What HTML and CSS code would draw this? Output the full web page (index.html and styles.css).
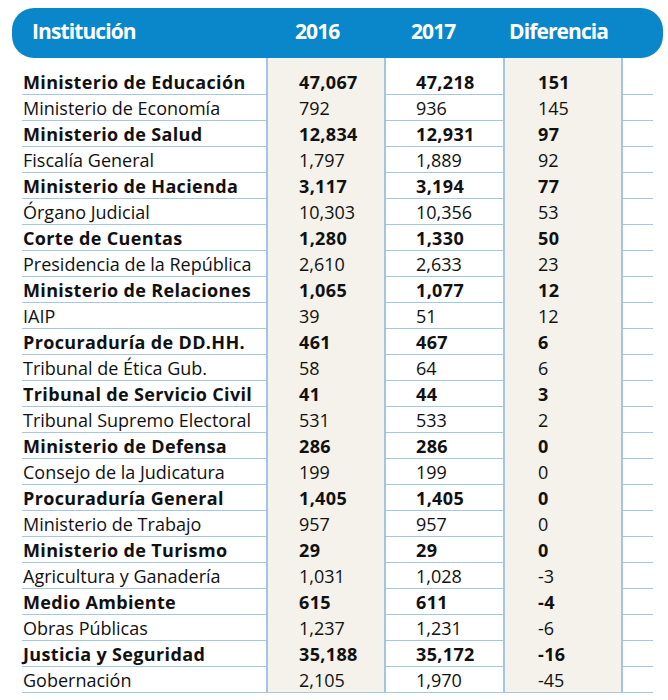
FILE: index.html
```html
<!DOCTYPE html>
<html lang="es">
<head>
<meta charset="utf-8">
<link rel="stylesheet" href="styles.css">
</head>
<body>
<div class="chart">
  <div class="head">
    <div class="hc h-inst"><span>Institución</span></div>
    <div class="hc h-a"><span>2016</span></div>
    <div class="hc h-b"><span>2017</span></div>
    <div class="hc h-c"><span>Diferencia</span></div>
  </div>
  <div class="body">
    <div class="row spacer"><div class="c name"></div><div class="c shade"></div><div class="c plain"></div><div class="c shade"></div><div class="c tail"></div></div>
    <div class="row b"><div class="c name">Ministerio de Educación</div><div class="c shade">47,067</div><div class="c plain">47,218</div><div class="c shade">151</div><div class="c tail"></div></div>
    <div class="row"><div class="c name">Ministerio de Economía</div><div class="c shade">792</div><div class="c plain">936</div><div class="c shade">145</div><div class="c tail"></div></div>
    <div class="row b"><div class="c name">Ministerio de Salud</div><div class="c shade">12,834</div><div class="c plain">12,931</div><div class="c shade">97</div><div class="c tail"></div></div>
    <div class="row"><div class="c name">Fiscalía General</div><div class="c shade">1,797</div><div class="c plain">1,889</div><div class="c shade">92</div><div class="c tail"></div></div>
    <div class="row b"><div class="c name">Ministerio de Hacienda</div><div class="c shade">3,117</div><div class="c plain">3,194</div><div class="c shade">77</div><div class="c tail"></div></div>
    <div class="row"><div class="c name">Órgano Judicial</div><div class="c shade">10,303</div><div class="c plain">10,356</div><div class="c shade">53</div><div class="c tail"></div></div>
    <div class="row b"><div class="c name">Corte de Cuentas</div><div class="c shade">1,280</div><div class="c plain">1,330</div><div class="c shade">50</div><div class="c tail"></div></div>
    <div class="row"><div class="c name">Presidencia de la República</div><div class="c shade">2,610</div><div class="c plain">2,633</div><div class="c shade">23</div><div class="c tail"></div></div>
    <div class="row b"><div class="c name">Ministerio de Relaciones</div><div class="c shade">1,065</div><div class="c plain">1,077</div><div class="c shade">12</div><div class="c tail"></div></div>
    <div class="row"><div class="c name">IAIP</div><div class="c shade">39</div><div class="c plain">51</div><div class="c shade">12</div><div class="c tail"></div></div>
    <div class="row b"><div class="c name">Procuraduría de DD.HH.</div><div class="c shade">461</div><div class="c plain">467</div><div class="c shade">6</div><div class="c tail"></div></div>
    <div class="row"><div class="c name">Tribunal de Ética Gub.</div><div class="c shade">58</div><div class="c plain">64</div><div class="c shade">6</div><div class="c tail"></div></div>
    <div class="row b"><div class="c name">Tribunal de Servicio Civil</div><div class="c shade">41</div><div class="c plain">44</div><div class="c shade">3</div><div class="c tail"></div></div>
    <div class="row"><div class="c name">Tribunal Supremo Electoral</div><div class="c shade">531</div><div class="c plain">533</div><div class="c shade">2</div><div class="c tail"></div></div>
    <div class="row b"><div class="c name">Ministerio de Defensa</div><div class="c shade">286</div><div class="c plain">286</div><div class="c shade">0</div><div class="c tail"></div></div>
    <div class="row"><div class="c name">Consejo de la Judicatura</div><div class="c shade">199</div><div class="c plain">199</div><div class="c shade">0</div><div class="c tail"></div></div>
    <div class="row b"><div class="c name">Procuraduría General</div><div class="c shade">1,405</div><div class="c plain">1,405</div><div class="c shade">0</div><div class="c tail"></div></div>
    <div class="row"><div class="c name">Ministerio de Trabajo</div><div class="c shade">957</div><div class="c plain">957</div><div class="c shade">0</div><div class="c tail"></div></div>
    <div class="row b"><div class="c name">Ministerio de Turismo</div><div class="c shade">29</div><div class="c plain">29</div><div class="c shade">0</div><div class="c tail"></div></div>
    <div class="row"><div class="c name">Agricultura y Ganadería</div><div class="c shade">1,031</div><div class="c plain">1,028</div><div class="c shade">-3</div><div class="c tail"></div></div>
    <div class="row b"><div class="c name">Medio Ambiente</div><div class="c shade">615</div><div class="c plain">611</div><div class="c shade">-4</div><div class="c tail"></div></div>
    <div class="row"><div class="c name">Obras Públicas</div><div class="c shade">1,237</div><div class="c plain">1,231</div><div class="c shade">-6</div><div class="c tail"></div></div>
    <div class="row b"><div class="c name">Justicia y Seguridad</div><div class="c shade">35,188</div><div class="c plain">35,172</div><div class="c shade">-16</div><div class="c tail"></div></div>
    <div class="row"><div class="c name">Gobernación</div><div class="c shade">2,105</div><div class="c plain">1,970</div><div class="c shade">-45</div><div class="c tail"></div></div>
  </div>
</div>
</body>
</html>
```
FILE: styles.css
```css
* { box-sizing: border-box; }
html, body { margin: 0; padding: 0; background: #ffffff; }
body { width: 668px; height: 700px; overflow: hidden; }

.chart { padding-top: 8px; }

.head {
  margin-left: 12px;
  margin-right: 5px;
  height: 50px;
  background: #0a87ca;
  border-radius: 22px;
  display: grid;
  grid-template-columns: 254px 118px 119px 118px 1fr;
  align-items: center;
  color: #ffffff;
  font-family: "Open Sans", "Noto Sans", sans-serif;
  font-weight: 700;
  font-size: 21px;
  letter-spacing: -0.9px;
  padding-bottom: 5px;
}
.hc span { display: inline-block; }
.h-inst { padding-left: 20px; }
.h-a { padding-left: 29px; }
.h-b { padding-left: 27px; }
.h-c { padding-left: 6px; }

.body {
  margin-left: 22px;
  font-family: "Open Sans", "Noto Sans", sans-serif;
  font-size: 18px;
  color: #111111;
}
.row {
  display: grid;
  grid-template-columns: 244px 118px 119px 118px 32px;
  height: 26px;
}
.row.spacer { height: 9px; }
.row.b { font-weight: 700; letter-spacing: 0.35px; }
.c {
  border-bottom: 1px solid #a4c7e6;
  display: flex;
  align-items: center;
  padding-top: 3px;
  white-space: nowrap;
}
.spacer .c { border-bottom: none; }
.name { padding-left: 1px; }
.shade {
  background: #f4f2eb;
  border-left: 2px solid #a1c5e6;
  padding-left: 31px;
}
.plain {
  border-left: 2px solid #a1c5e6;
  padding-left: 30px;
}
.row .c:nth-child(4) { padding-left: 33px; }
.tail { border-left: 2px solid #a1c5e6; }
```
